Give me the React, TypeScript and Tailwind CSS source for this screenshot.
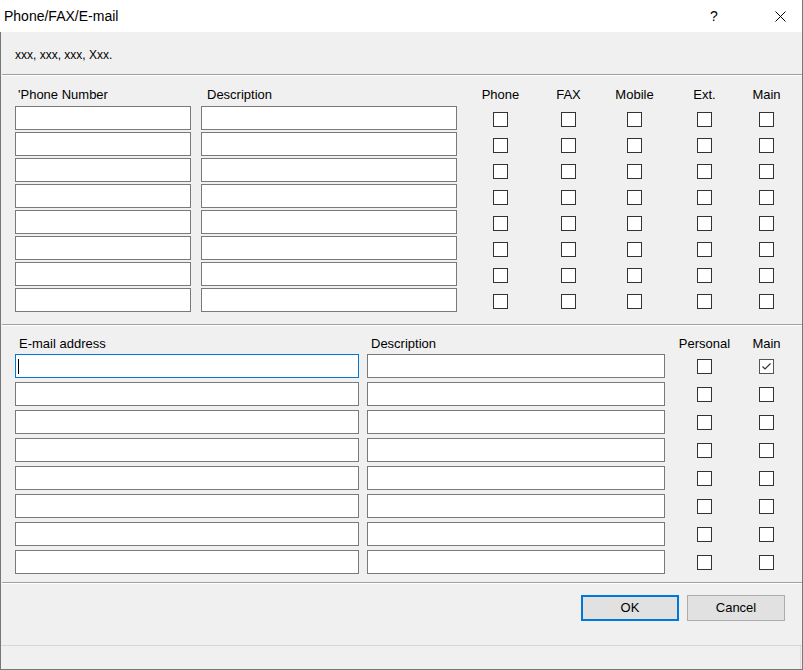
import React from "react";

const font = "font-['Liberation_Sans',Arial,sans-serif]";

type Col = { label: string; ml: string };

// checkbox columns of the phone grid (left margin before each 15px box)
const phoneCols: Col[] = [
  { label: "Phone", ml: "ml-[36px]" },
  { label: "FAX", ml: "ml-[53px]" },
  { label: "Mobile", ml: "ml-[51px]" },
  { label: "Ext.", ml: "ml-[55px]" },
  { label: "Main", ml: "ml-[47px]" },
];

const mailCols: Col[] = [
  { label: "Personal", ml: "ml-[32px]" },
  { label: "Main", ml: "ml-[47px]" },
];

const Box = ({ checked = false, top }: { checked?: boolean; top: string }) => (
  <div
    className={`${top} w-[15px] h-[15px] shrink-0 bg-white border ${
      checked ? "border-[#555]" : "border-[#333]"
    } flex items-center justify-center`}
  >
    {checked && (
      <svg width="11" height="11" viewBox="0 0 11 11">
        <polyline points="1.5,5.5 4,8 9.5,2.5" fill="none" stroke="#333" strokeWidth="1.2" />
      </svg>
    )}
  </div>
);

const Field = ({ w, active = false, children }: { w: string; active?: boolean; children?: React.ReactNode }) => (
  <div
    className={`${w} h-[24px] shrink-0 bg-white border ${
      active ? "border-[#0078d7]" : "border-[#7a7a7a]"
    } flex items-center`}
  >
    {children}
  </div>
);

const ColHead = ({ c }: { c: Col }) => (
  <div className={`${c.ml} w-[15px] shrink-0 flex justify-center whitespace-nowrap`}>{c.label}</div>
);

const Separator = () => (
  <div className="ml-[1px] h-[2px] shrink-0 border-t border-[#a0a0a0] border-b border-b-white" />
);

export default function App() {
  const rows = Array.from({ length: 8 }, (_, i) => i);

  return (
    <div className={`${font} w-[803px] h-[670px] flex flex-col text-black select-none`}>
      {/* title bar */}
      <div className="h-[32px] shrink-0 bg-white border-r border-[#777] flex items-center">
        <span className="ml-[4px] text-[14px]">Phone/FAX/E-mail</span>
        <div className="ml-auto mr-[21px] w-[46px] flex justify-center text-[14px]">?</div>
        <div className="w-[44px] flex justify-center">
          <svg width="11" height="11" viewBox="0 0 11 11">
            <path d="M0.5 0.5 L10.5 10.5 M10.5 0.5 L0.5 10.5" stroke="#000" strokeWidth="1" />
          </svg>
        </div>
      </div>

      {/* dialog body */}
      <div className="flex-1 flex flex-col bg-[#f0f0f0] border-l border-r border-b border-[#777] text-[13px]">
        <div className="h-[42px] shrink-0 flex items-center pt-[4px] pl-[14px] text-[12px]">
          xxx, xxx, xxx, Xxx.
        </div>
        <Separator />

        {/* phone numbers */}
        <div className="h-[30px] shrink-0 flex items-end pb-[4px] pl-[14px] leading-[15px]">
          <div className="w-[176px] shrink-0 pl-[3px]">'Phone Number</div>
          <div className="ml-[10px] w-[256px] shrink-0 pl-[6px]">Description</div>
          {phoneCols.map((c) => (
            <ColHead key={c.label} c={c} />
          ))}
        </div>
        <div className="flex flex-col gap-[2px] pl-[14px]">
          {rows.map((r) => (
            <div key={r} className="flex items-start">
              <Field w="w-[176px]" />
              <div className="ml-[10px]">
                <Field w="w-[256px]" />
              </div>
              {phoneCols.map((c) => (
                <div key={c.label} className={c.ml}>
                  <Box top="mt-[6px]" />
                </div>
              ))}
            </div>
          ))}
        </div>
        <div className="h-[12px] shrink-0" />
        <Separator />

        {/* e-mail addresses */}
        <div className="h-[28px] shrink-0 flex items-end pb-[3px] pl-[14px] leading-[15px]">
          <div className="w-[344px] shrink-0 pl-[4px]">E-mail address</div>
          <div className="ml-[8px] w-[298px] shrink-0 pl-[4px]">Description</div>
          {mailCols.map((c) => (
            <ColHead key={c.label} c={c} />
          ))}
        </div>
        <div className="flex flex-col gap-[4px] pl-[14px]">
          {rows.map((r) => (
            <div key={r} className="flex items-start">
              <Field w="w-[344px]" active={r === 0}>
                {r === 0 && <span className="ml-[2px] w-px h-[15px] bg-black" />}
              </Field>
              <div className="ml-[8px]">
                <Field w="w-[298px]" />
              </div>
              {mailCols.map((c, i) => (
                <div key={c.label} className={c.ml}>
                  <Box top="mt-[5px]" checked={r === 0 && i === 1} />
                </div>
              ))}
            </div>
          ))}
        </div>
        <div className="h-[8px] shrink-0" />
        <Separator />

        {/* buttons */}
        <div className="h-[61px] shrink-0 flex items-start justify-end gap-[8px] pt-[11px] pr-[17px]">
          <button className="w-[98px] h-[26px] bg-[#e1e1e1] border-2 border-[#0078d7] text-[13px]">OK</button>
          <button className="w-[98px] h-[26px] bg-[#e1e1e1] border border-[#adadad] text-[13px]">Cancel</button>
        </div>

        {/* status bar */}
        <div className="flex-1 border-t border-[#d7d7d7] flex justify-end">
          <div className="w-[2px] border-l border-[#dcdcdc]" />
        </div>
      </div>
    </div>
  );
}
